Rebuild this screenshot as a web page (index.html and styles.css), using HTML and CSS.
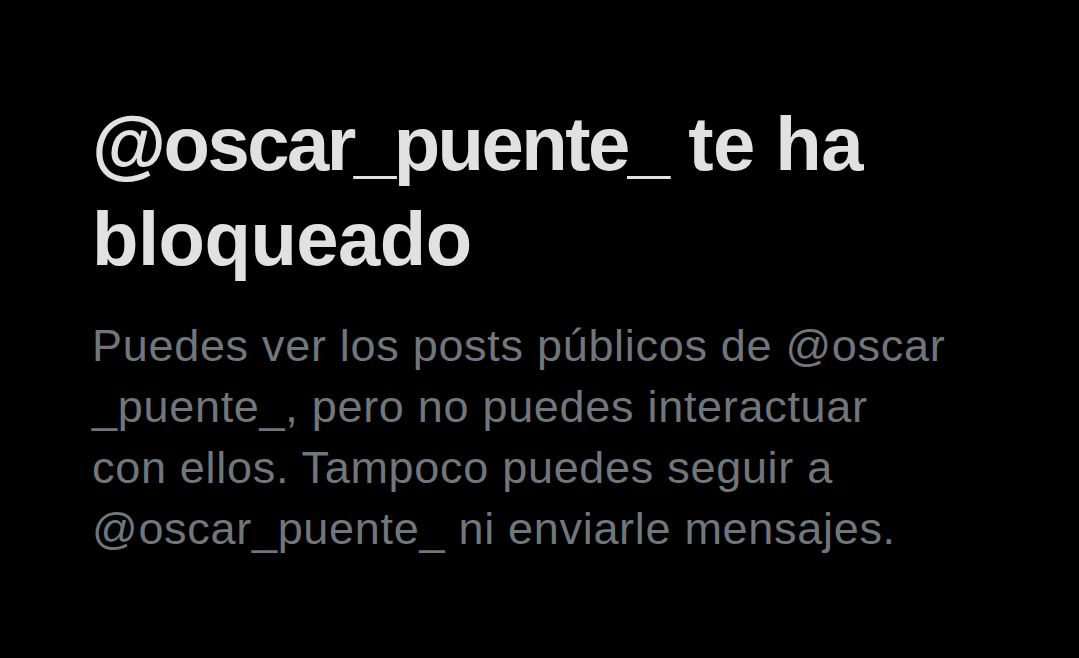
FILE: index.html
```html
<!DOCTYPE html>
<html lang="es">
<head>
  <meta charset="UTF-8" />
  <meta name="viewport" content="width=device-width, initial-scale=1.0" />
  <title>Bloqueado</title>
  <link rel="stylesheet" href="styles.css">
</head>
<body>
  <main class="blocked">
    <h1 class="blocked-title"><span class="handle">@oscar_puente_</span> te ha<br>bloqueado</h1>
    <p class="blocked-text">
      Puedes ver los posts públicos de @oscar<br>
      _puente_, pero no puedes interactuar<br>
      con ellos. Tampoco puedes seguir a<br>
      @oscar_puente_ ni enviarle mensajes.
    </p>
  </main>
</body>
</html>
```

FILE: styles.css
```css
* {
  margin: 0;
  padding: 0;
  box-sizing: border-box;
}

html, body {
  height: 100%;
}

body {
  background: #000;
  overflow: hidden;
}

.blocked {
  padding: 96px 0 0 92px;
}

.blocked-title {
  font-family: 'Liberation Sans', Arial, sans-serif;
  font-weight: 700;
  font-size: 76px;
  line-height: 95px;
  color: #e1e1e1;
  letter-spacing: -0.5px;
}

.blocked-title .handle {
  letter-spacing: -2.5px;
}

.blocked-text {
  margin-top: 29px;
  font-family: 'Liberation Sans', Arial, sans-serif;
  font-size: 45px;
  line-height: 61px;
  letter-spacing: 0.7px;
  color: #71767b;
}
```
